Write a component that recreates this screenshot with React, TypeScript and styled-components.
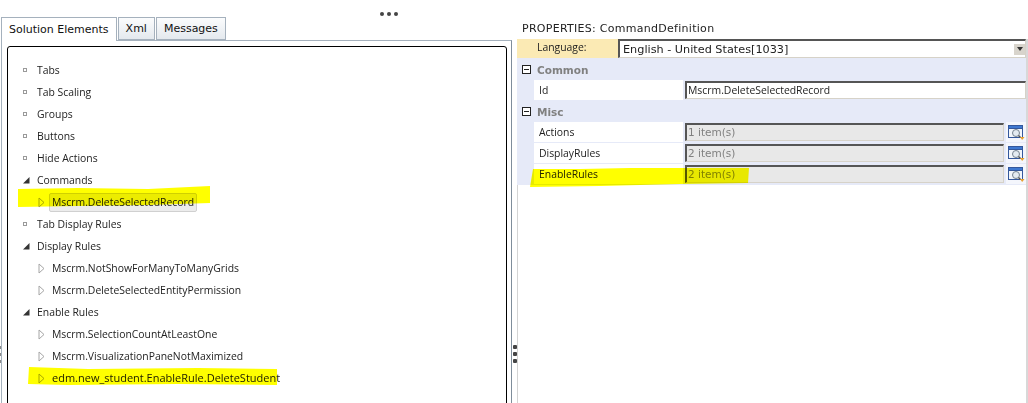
import React from "react";
import styled, { createGlobalStyle } from "styled-components";

const GlobalStyle = createGlobalStyle`
  html, body {
    margin: 0;
    padding: 0;
    background: #fff;
  }
`;

const treeFont = `"Open Sans", "Noto Sans", sans-serif`;
const uiFont = `"DejaVu Sans", Verdana, sans-serif`;

type TreeRow =
  | { kind: "leaf"; label: string }
  | { kind: "open"; label: string }
  | { kind: "child"; label: string; selected?: boolean; added?: boolean };

const rows: TreeRow[] = [
  { kind: "leaf", label: "Tabs" },
  { kind: "leaf", label: "Tab Scaling" },
  { kind: "leaf", label: "Groups" },
  { kind: "leaf", label: "Buttons" },
  { kind: "leaf", label: "Hide Actions" },
  { kind: "open", label: "Commands" },
  { kind: "child", label: "Mscrm.DeleteSelectedRecord", selected: true },
  { kind: "leaf", label: "Tab Display Rules" },
  { kind: "open", label: "Display Rules" },
  { kind: "child", label: "Mscrm.NotShowForManyToManyGrids" },
  { kind: "child", label: "Mscrm.DeleteSelectedEntityPermission" },
  { kind: "open", label: "Enable Rules" },
  { kind: "child", label: "Mscrm.SelectionCountAtLeastOne" },
  { kind: "child", label: "Mscrm.VisualizationPaneNotMaximized" },
  { kind: "child", label: "edm.new_student.EnableRule.DeleteStudent", added: true }
];

const LookupIcon = () => (
  <svg width="18" height="18" viewBox="0 0 18 18">
    <rect x="1.5" y="2.5" width="14" height="12" fill="#f2f6fb" stroke="#34589c" />
    <rect x="1.5" y="2.5" width="14" height="3" fill="#3f78d0" stroke="#34589c" />
    <circle cx="9" cy="10" r="3.5" fill="#e4ebf1" stroke="#76838f" />
    <path d="M11.5 12.5 L13.5 14.5" stroke="#555" strokeWidth="1.4" />
    <path d="M13 14 H17.5 L15.2 17 Z" fill="#e8a030" />
  </svg>
);

const TreeGlyph = ({ kind }: { kind: TreeRow["kind"] }) => {
  if (kind === "leaf") {
    return (
      <svg width="5" height="5" viewBox="0 0 5 5">
        <rect x="0.5" y="0.5" width="3" height="3" fill="#fff" stroke="#9a9a9a" />
      </svg>
    );
  }
  if (kind === "open") {
    return (
      <svg width="7" height="7" viewBox="0 0 7 7">
        <path d="M6.5 0 V6.5 H0 Z" fill="#333" />
      </svg>
    );
  }
  return (
    <svg width="7" height="11" viewBox="0 0 7 11">
      <path d="M1 1 L6 5.5 L1 10 Z" fill="#fff" stroke="#a6a6a6" />
    </svg>
  );
};

const Collapse = () => (
  <svg width="9" height="9" viewBox="0 0 9 9">
    <rect x="0.5" y="0.5" width="8" height="8" fill="#fff" stroke="#222" />
    <path d="M2 4.5 H7" stroke="#222" />
  </svg>
);

const App = () => (
  <Page>
    <GlobalStyle />
    <TopStrip>
      <Dot />
      <Dot />
      <Dot />
    </TopStrip>
    <Main>
      <EdgeGrip>
        <EdgeDot />
        <EdgeDot />
        <EdgeDot />
      </EdgeGrip>
      <LeftPane>
        <TabRow>
          <Tab $active>Solution Elements</Tab>
          <Tab>Xml</Tab>
          <Tab>Messages</Tab>
        </TabRow>
        <TabBody>
          <TreeBox>
            {rows.map((row) => (
              <Row key={row.label} $child={row.kind === "child"}>
                <GlyphSlot>
                  <TreeGlyph kind={row.kind} />
                </GlyphSlot>
                <RowLabel
                  $selected={row.kind === "child" && row.selected}
                  $added={row.kind === "child" && row.added}
                >
                  {row.label}
                </RowLabel>
              </Row>
            ))}
          </TreeBox>
        </TabBody>
      </LeftPane>
      <Splitter>
        <SplitDot />
        <SplitDot />
        <SplitDot />
      </Splitter>
      <RightPane>
        <PaneTitle>PROPERTIES: CommandDefinition</PaneTitle>
        <PaneBody>
          <LanguageRow>
            <LanguageLabel>Language:</LanguageLabel>
            <LanguageSelect>
              <span>English - United States[1033]</span>
              <SelectArrow />
            </LanguageSelect>
          </LanguageRow>
          <Grid>
            <Section>
              <Collapse />
              <span>Common</span>
            </Section>
            <PropRow>
              <PropName>Id</PropName>
              <PropValue>Mscrm.DeleteSelectedRecord</PropValue>
            </PropRow>
            <Section>
              <Collapse />
              <span>Misc</span>
            </Section>
            {[
              ["Actions", "1 item(s)"],
              ["DisplayRules", "2 item(s)"],
              ["EnableRules", "2 item(s)"]
            ].map(([name, value]) => (
              <PropRow key={name}>
                <PropName>{name}</PropName>
                <PropValue $disabled>{value}</PropValue>
                <LookupButton>
                  <LookupIcon />
                </LookupButton>
              </PropRow>
            ))}
          </Grid>
        </PaneBody>
      </RightPane>
    </Main>
    <Marker $x={18} $y={186} $w={192} $h={22}>
      <polygon points="0,3 60,2 130,3 192,0 192,17 130,19 60,20 0,21" />
    </Marker>
    <Marker $x={28} $y={367} $w={250} $h={19}>
      <polygon points="1,0 60,2 170,1 249,2 249,18 150,17 40,18 0,17" />
    </Marker>
    <Marker $x={530} $y={166} $w={219} $h={22}>
      <polygon points="3,3 50,3 100,2 219,2 218,17 150,18 70,20 0,21" />
    </Marker>
  </Page>
);

const Page = styled.div`
  position: relative;
  display: flex;
  flex-direction: column;
  width: 1028px;
  height: 403px;
  overflow: hidden;
  background: #fff;
`;

const TopStrip = styled.div`
  display: flex;
  gap: 3px;
  height: 17px;
  box-sizing: border-box;
  padding: 12px 0 0 380px;
`;

const Dot = styled.span`
  width: 4px;
  height: 4px;
  border-radius: 50%;
  background: #444;
`;

const Main = styled.div`
  display: flex;
  flex: 1;
  min-height: 0;
`;

const EdgeGrip = styled.div`
  display: flex;
  flex-direction: column;
  gap: 4px;
  flex: none;
  width: 1px;
  padding-top: 329px;
`;

const EdgeDot = styled.span`
  flex: none;
  height: 3px;
  background: #8a8a8a;
`;

const LeftPane = styled.div`
  display: flex;
  flex-direction: column;
  width: 511px;
`;

const TabRow = styled.div`
  display: flex;
  gap: 1px;
  height: 24px;
  font-family: ${uiFont};
  font-size: 11px;
`;

const Tab = styled.div<{ $active?: boolean }>`
  display: flex;
  align-items: center;
  box-sizing: border-box;
  height: ${(p) => (p.$active ? "24px" : "23px")};
  padding: 0 7px;
  border: 1px solid #a5b1bd;
  border-bottom: ${(p) => (p.$active ? "none" : "1px solid #a5b1bd")};
  background: ${(p) =>
    p.$active ? "#fff" : "linear-gradient(#fbfcfd, #e4e9ee)"};
  color: #111;
  position: relative;
  z-index: 1;
`;

const TabBody = styled.div`
  flex: 1;
  min-height: 0;
  margin-top: -1px;
  border-top: 1px solid #a5b1bd;
  border-left: 1px solid #a5b1bd;
  border-right: 1px solid #7f8d9b;
  padding: 5px 4px 0 5px;
`;

const TreeBox = styled.div`
  height: 400px;
  box-sizing: border-box;
  border: 1px solid #000;
  border-radius: 3px 3px 0 0;
  padding: 12px 0 0 15px;
`;

const Row = styled.div<{ $child?: boolean }>`
  display: flex;
  align-items: center;
  height: 22px;
  padding-left: ${(p) => (p.$child ? "15px" : "0")};
  font-family: ${treeFont};
  font-size: 10.4px;
  color: #222;
`;

const GlyphSlot = styled.span`
  display: flex;
  align-items: center;
  width: 14px;
`;

const RowLabel = styled.span<{ $selected?: boolean; $added?: boolean }>`
  ${(p) => (p.$added ? "font-size: 11px; margin-bottom: 2px;" : "")}
  ${(p) =>
    p.$selected
      ? `
    margin-left: -3px;
    padding: 1px 2px 2px;
    border: 1px solid #d0d0d0;
    border-radius: 2px;
    background: #ececec;
  `
      : ""}
`;

const Splitter = styled.div`
  display: flex;
  flex-direction: column;
  gap: 3px;
  align-items: center;
  width: 5px;
  padding-top: 328px;
`;

const SplitDot = styled.span`
  flex: none;
  width: 4px;
  height: 4px;
  background: #444;
  border-radius: 1px;
`;

const RightPane = styled.div`
  display: flex;
  flex-direction: column;
  flex: 1;
  min-width: 0;
  font-family: ${treeFont};
  font-size: 10.4px;
  color: #222;
`;

const PaneTitle = styled.div`
  height: 22px;
  box-sizing: border-box;
  padding: 1px 0 0 5px;
  line-height: 21px;
  font-family: ${uiFont};
  font-size: 11px;
  letter-spacing: 0.28px;
`;

const PaneBody = styled.div`
  flex: 1;
  min-height: 0;
  border-left: 1px solid #d4d4d4;
  border-right: 2px solid #d8d8d8;
`;

const LanguageRow = styled.div`
  display: flex;
  height: 19px;
  margin-left: -1px;
`;

const LanguageLabel = styled.div`
  flex: none;
  width: 101px;
  padding-left: 20px;
  box-sizing: border-box;
  background: #fbeab4;
  line-height: 17px;
`;

const LanguageSelect = styled.div`
  display: flex;
  align-items: center;
  justify-content: space-between;
  flex: 1;
  box-sizing: border-box;
  padding: 0 0 0 3px;
  border: 1px solid #d6d2c8;
  border-top: 2px solid #555;
  border-left: 2px solid #555;
  background: #fff;
  font-family: ${uiFont};
  font-size: 11.25px;
`;

const SelectArrow = styled.span`
  display: flex;
  align-items: center;
  justify-content: center;
  width: 11px;
  height: 11px;
  background: #d8d4cc;

  &::after {
    content: "";
    border-left: 3px solid transparent;
    border-right: 3px solid transparent;
    border-top: 4px solid #333;
  }
`;

const Grid = styled.div`
  display: flex;
  flex-direction: column;
  margin-left: -1px;
  padding-bottom: 1px;
  background: #e6eaf8;
`;

const Section = styled.div`
  display: flex;
  align-items: center;
  gap: 6px;
  height: 21px;
  box-sizing: border-box;
  padding: 2px 0 0 5px;
  font-family: ${uiFont};
  font-weight: bold;
  color: #808080;
  font-size: 10.5px;
`;

const PropRow = styled.div`
  display: flex;
  align-items: center;
  height: 21px;
  margin-left: 17px;
`;

const PropName = styled.div`
  width: 149px;
  height: 20px;
  flex: none;
  box-sizing: border-box;
  padding-left: 5px;
  background: #fff;
  line-height: 21px;
  margin-right: 2px;
`;

const PropValue = styled.div<{ $disabled?: boolean }>`
  flex: 1;
  min-width: 0;
  height: 18px;
  box-sizing: border-box;
  padding-left: 1px;
  border: 1px solid #d6d2c8;
  border-top: 2px solid #555;
  border-left: 2px solid #555;
  background: ${(p) => (p.$disabled ? "#e8e8e8" : "#fff")};
  color: ${(p) => (p.$disabled ? "#808080" : "#222")};
  font-family: ${(p) => (p.$disabled ? uiFont : treeFont)};
  font-size: ${(p) => (p.$disabled ? "10.5px" : "10.4px")};
  line-height: 15px;
`;

const LookupButton = styled.div`
  display: flex;
  align-items: center;
  justify-content: center;
  flex: none;
  width: 20px;
  height: 20px;
  margin-left: 2px;
  background: #f4f6fc;
`;

const Marker: React.FC<{
  $x: number;
  $y: number;
  $w: number;
  $h: number;
  children: React.ReactNode;
}> = ({ $x, $y, $w, $h, children }) => (
  <MarkerSvg
    style={{ left: $x, top: $y }}
    width={$w}
    height={$h}
    viewBox={`0 0 ${$w} ${$h}`}
  >
    {children}
  </MarkerSvg>
);

const MarkerSvg = styled.svg`
  position: absolute;
  fill: #ffff00;
  mix-blend-mode: multiply;
`;

export default App;
